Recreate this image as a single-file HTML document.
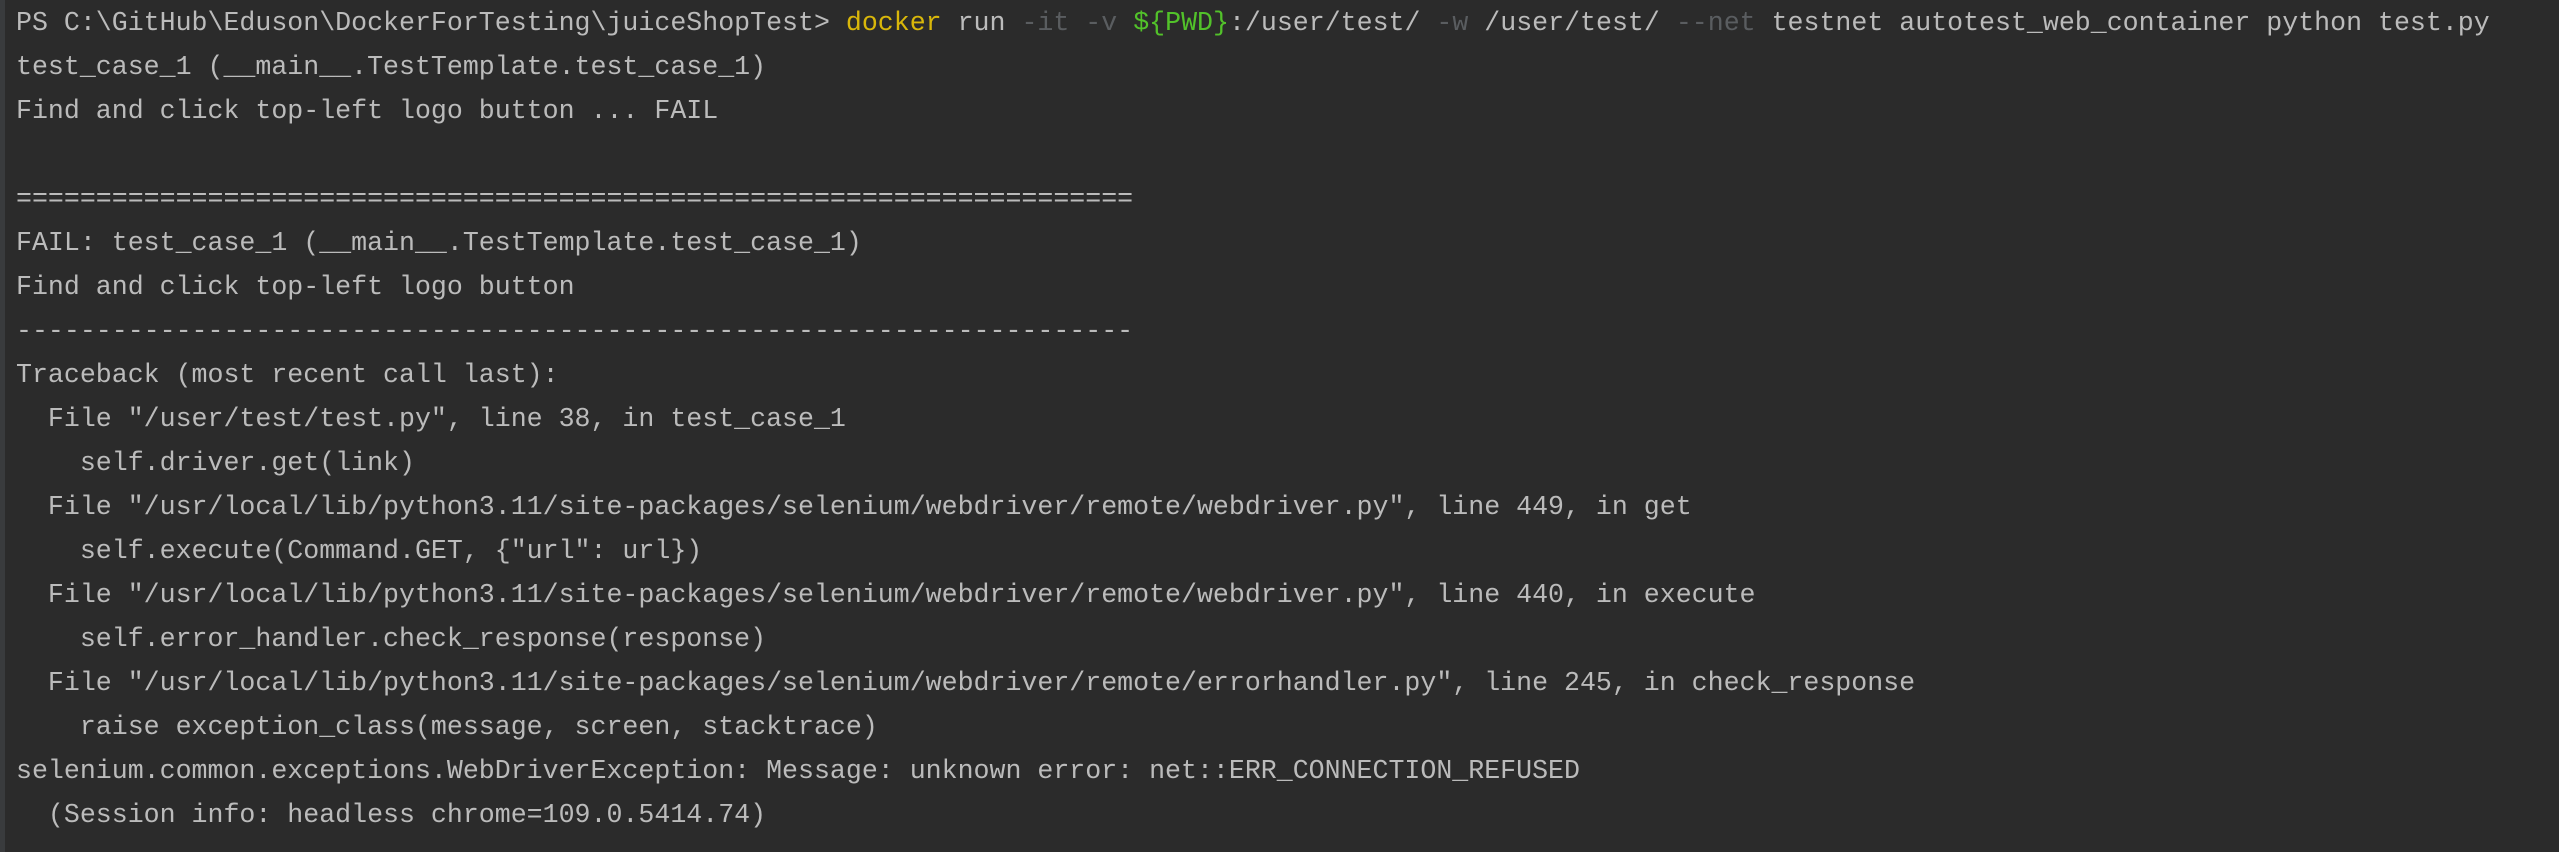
<!DOCTYPE html>
<html><head><meta charset="utf-8"><style>
html,body{margin:0;padding:0;width:2559px;height:852px;overflow:hidden;}
body{background:#2b2b2b;position:relative;}
.bar{position:absolute;left:0;top:0;width:5px;height:852px;background:#393b3d;}
pre{margin:0;position:absolute;left:16px;top:1px;font-family:"Liberation Mono",monospace;font-size:26.6px;line-height:44px;color:#bbbbbb;white-space:pre;}
.y{color:#d9b70a}.g{color:#5a5d60}.gr{color:#52c22a}
</style></head><body><div class="bar"></div><pre>PS C:\GitHub\Eduson\DockerForTesting\juiceShopTest&gt; <span class="y">docker</span> run <span class="g">-it</span> <span class="g">-v</span> <span class="gr">${PWD}</span>:/user/test/ <span class="g">-w</span> /user/test/ <span class="g">--net</span> testnet autotest_web_container python test.py
test_case_1 (__main__.TestTemplate.test_case_1)
Find and click top-left logo button ... FAIL

======================================================================
FAIL: test_case_1 (__main__.TestTemplate.test_case_1)
Find and click top-left logo button
----------------------------------------------------------------------
Traceback (most recent call last):
  File "/user/test/test.py", line 38, in test_case_1
    self.driver.get(link)
  File "/usr/local/lib/python3.11/site-packages/selenium/webdriver/remote/webdriver.py", line 449, in get
    self.execute(Command.GET, {"url": url})
  File "/usr/local/lib/python3.11/site-packages/selenium/webdriver/remote/webdriver.py", line 440, in execute
    self.error_handler.check_response(response)
  File "/usr/local/lib/python3.11/site-packages/selenium/webdriver/remote/errorhandler.py", line 245, in check_response
    raise exception_class(message, screen, stacktrace)
selenium.common.exceptions.WebDriverException: Message: unknown error: net::ERR_CONNECTION_REFUSED
  (Session info: headless chrome=109.0.5414.74)</pre></body></html>
